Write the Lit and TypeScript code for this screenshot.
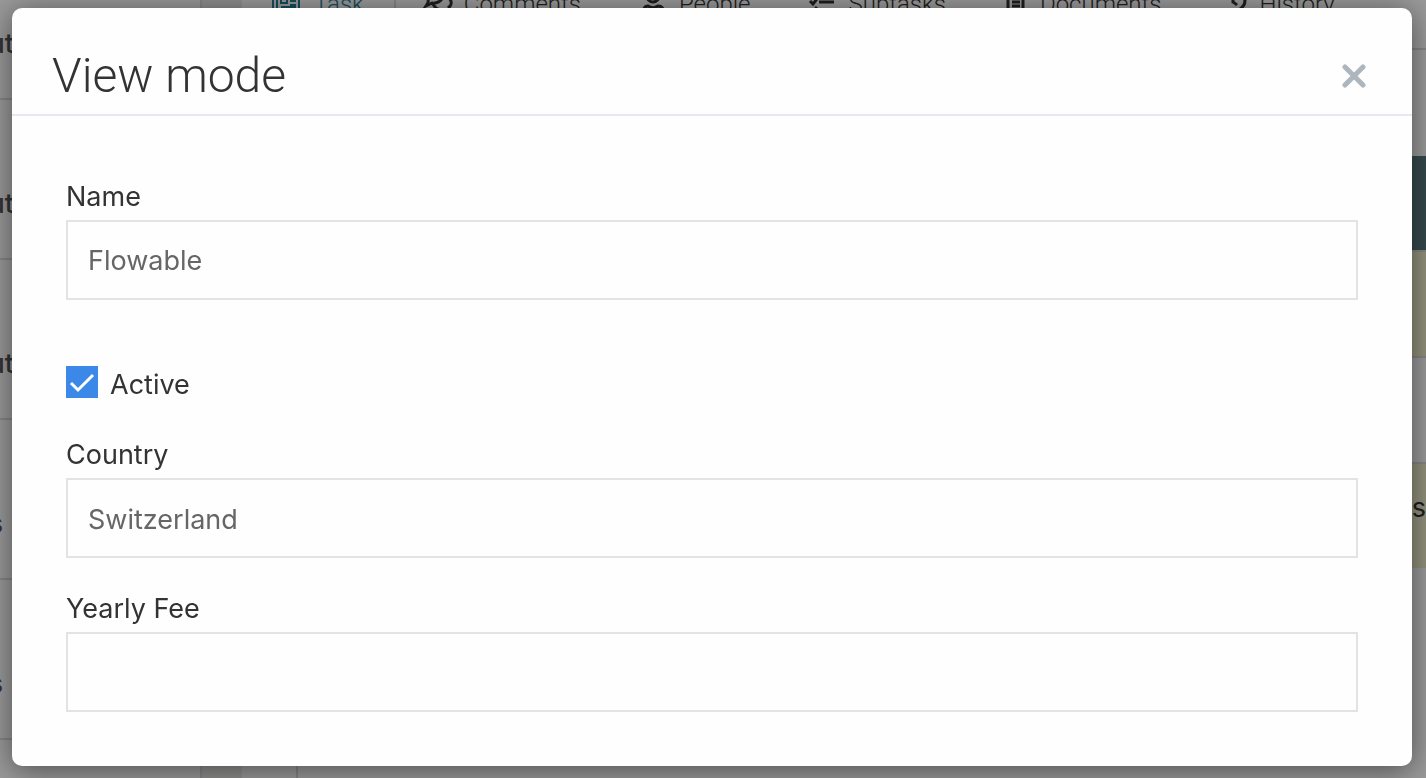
import { LitElement, html, css, svg } from "lit";
import { customElement } from "lit/decorators.js";

const icons = {
  task: svg`<path d="M3 -8V12M7 -10V14M29 -10V14M7 -10H29" /><path d="M11 -4H17V3H11ZM20 -3H26M20 1H26M20 5H26M11 7H26" />`,
  comments: svg`<path d="M8 0C4 -12 23 -14 23 -5C23 1 16 4 12 3L6 6C8 3 9 2 8 0M25 -4C33 -1 32 5 29 7L31 12C27 10 24 10 22 10C18 10 15 8 13 4" />`,
  people: svg`<circle cx="18" cy="-4" r="6" /><path d="M8 14C8 8 10 6 13 6C16 8 20 8 23 6C26 6 29 8 29 14" />`,
  subtasks: svg`<path d="M5 1L8 4L12 -1M14 2H29M5 10L8 12L12 7M14 11H29" />`,
  documents: svg`<path d="M8 -10H23V14H8ZM12 2H20M12 6H20M12 -2H20" />`,
  history: svg`<path d="M18 -2V2Q20 3 22 5M28 -6Q33 4 25 9" />`,
};

@customElement("app-root")
export class AppRoot extends LitElement {
  static styles = css`
    :host {
      display: block;
      height: 100vh;
      overflow: hidden;
      position: relative;
      font-family: Inter, "Liberation Sans", sans-serif;
      font-size: 27px;
      color: #333;
    }
    * {
      box-sizing: border-box;
    }
    .page {
      display: grid;
      grid-template-columns: 202px minmax(0, 1fr);
      column-gap: 40px;
      height: 100%;
      background: #eeedec;
      overflow: hidden;
    }
    .list {
      margin: 0;
      padding: 0;
      list-style: none;
      background: #fff;
      border-right: 2px solid #dedede;
    }
    .list li {
      display: flex;
      align-items: flex-end;
      height: 160px;
      padding-bottom: 38px;
      border-bottom: 2px solid #dedede;
      font-weight: 500;
      line-height: 32px;
      color: #555;
    }
    .list li:first-child {
      height: 100px;
    }
    .clip {
      display: flex;
      justify-content: flex-end;
      width: 14px;
      overflow: hidden;
    }
    .clip.short {
      width: 3px;
    }
    .main {
      display: flex;
      flex-direction: column;
      background: #fff;
      overflow: hidden;
    }
    .tabs {
      display: flex;
      height: 50px;
      padding-left: 4px;
      border-bottom: 2px solid #dedede;
      font: 300 24px/32px Roboto, sans-serif;
    }
    .tab {
      display: flex;
      align-items: flex-start;
      gap: 16px;
      height: 48px;
      padding: 0 30px 0 24px;
      color: #333;
      text-decoration: none;
    }
    .tab span {
      margin-top: -12px;
    }
    .tab.active {
      color: #24809a;
      border-right: 2px solid #dedede;
    }
    .tab svg {
      flex: none;
      width: 28px;
      height: 16px;
      overflow: visible;
      fill: none;
      stroke: currentColor;
      stroke-width: 3;
    }
    .tab.active svg {
      stroke-width: 2;
    }
    .tab.narrow svg {
      width: 24px;
    }
    .content {
      flex: 1;
      margin-left: 54px;
      padding-top: 106px;
      border-left: 2px solid #dedede;
    }
    table {
      width: 100%;
      border-collapse: separate;
      border-spacing: 0;
    }
    th {
      height: 94px;
      background: #59797f;
    }
    td {
      height: 106px;
      padding: 0 0 18px;
      border-top: 2px solid #dedede;
      text-align: right;
    }
    .marked {
      background: #f4f2cf;
    }
    .overlay {
      position: fixed;
      inset: 0;
      padding: 8px 14px 12px 12px;
      background: rgba(0, 0, 0, 0.4);
    }
    .modal {
      background: #fefefe;
      border-radius: 10px;
      box-shadow: 0 4px 30px rgba(0, 0, 0, 0.5);
    }
    header {
      display: flex;
      align-items: center;
      justify-content: space-between;
      height: 108px;
      padding: 30px 46px 0 40px;
      border-bottom: 2px solid #e8e8ef;
    }
    h1 {
      margin: 0;
      font: 300 48px/60px Roboto, sans-serif;
    }
    .close {
      display: block;
      width: 24px;
      height: 24px;
      padding: 0;
      border: 0;
      background: none;
    }
    .close svg {
      display: block;
      fill: none;
      stroke: #adb5bd;
      stroke-width: 5;
      stroke-linecap: round;
    }
    form {
      display: flex;
      flex-direction: column;
      padding: 64px 54px 54px;
      line-height: 34px;
    }
    .field {
      display: flex;
      flex-direction: column;
      gap: 6px;
      margin-bottom: 34px;
    }
    .field:last-child {
      margin-bottom: 0;
    }
    .box {
      appearance: none;
      width: 100%;
      height: 80px;
      margin: 0;
      padding: 0 20px;
      border: 2px solid #e3e3e3;
      border-radius: 0;
      outline: 0;
      background: #fefefe;
      font: inherit;
      color: #666;
      opacity: 1;
    }
    select.box {
      padding-top: 4px;
    }
    .check {
      display: flex;
      align-items: flex-start;
      gap: 12px;
      margin: 32px 0 36px;
    }
    .check label {
      padding-top: 2px;
    }
    .check input {
      appearance: none;
      flex: none;
      width: 32px;
      height: 32px;
      margin: 0;
      background: #3b88e9;
    }
    .mark {
      display: grid;
      flex: none;
    }
    .mark > * {
      grid-area: 1 / 1;
    }
    .mark svg {
      fill: none;
      stroke: #fff;
      stroke-width: 3;
      pointer-events: none;
    }
  `;

  private tab(label: string, icon: unknown, kind = "") {
    return html`<a class="tab ${kind}" href="#">
      <svg aria-hidden="true">${icon}</svg><span>${label}</span></a>`;
  }

  render() {
    return html`
      <div class="page">
        <ul class="list">
          ${["ut", "ut", "ut", "s", "s"].map(
            (t) => html`<li><span class="clip ${t === "s" ? "short" : ""}">${t}</span></li>`
          )}
        </ul>
        <div class="main">
          <nav class="tabs">
            ${this.tab("Task", icons.task, "active")}
            ${this.tab("Comments", icons.comments)}
            ${this.tab("People", icons.people)}
            ${this.tab("Subtasks", icons.subtasks)}
            ${this.tab("Documents", icons.documents, "narrow")}
            ${this.tab("History", icons.history)}
          </nav>
          <div class="content">
            <table>
              <thead><tr><th></th></tr></thead>
              <tbody>
                <tr><td class="marked"></td></tr>
                <tr><td></td></tr>
                <tr><td class="marked">s</td></tr>
              </tbody>
            </table>
          </div>
        </div>
      </div>
      <div class="overlay">
        <div class="modal" role="dialog" aria-labelledby="title">
          <header>
            <h1 id="title">View mode</h1>
            <button class="close" aria-label="Close">
              <svg width="24" height="24" viewBox="0 0 24 24"><path d="M3 3L21 21M21 3L3 21" /></svg>
            </button>
          </header>
          <form>
            <div class="field">
              <label for="name">Name</label>
              <input class="box" id="name" type="text" readonly value="Flowable" />
            </div>
            <div class="check">
              <span class="mark">
                <input id="active" type="checkbox" checked />
                <svg width="32" height="32" viewBox="0 0 32 32"><path d="M5 17L12 24L27 9" /></svg>
              </span>
              <label for="active">Active</label>
            </div>
            <div class="field">
              <label for="country">Country</label>
              <select class="box" id="country" disabled>
                <option selected>Switzerland</option>
              </select>
            </div>
            <div class="field">
              <label for="fee">Yearly Fee</label>
              <input class="box" id="fee" type="text" readonly />
            </div>
          </form>
        </div>
      </div>
    `;
  }
}
